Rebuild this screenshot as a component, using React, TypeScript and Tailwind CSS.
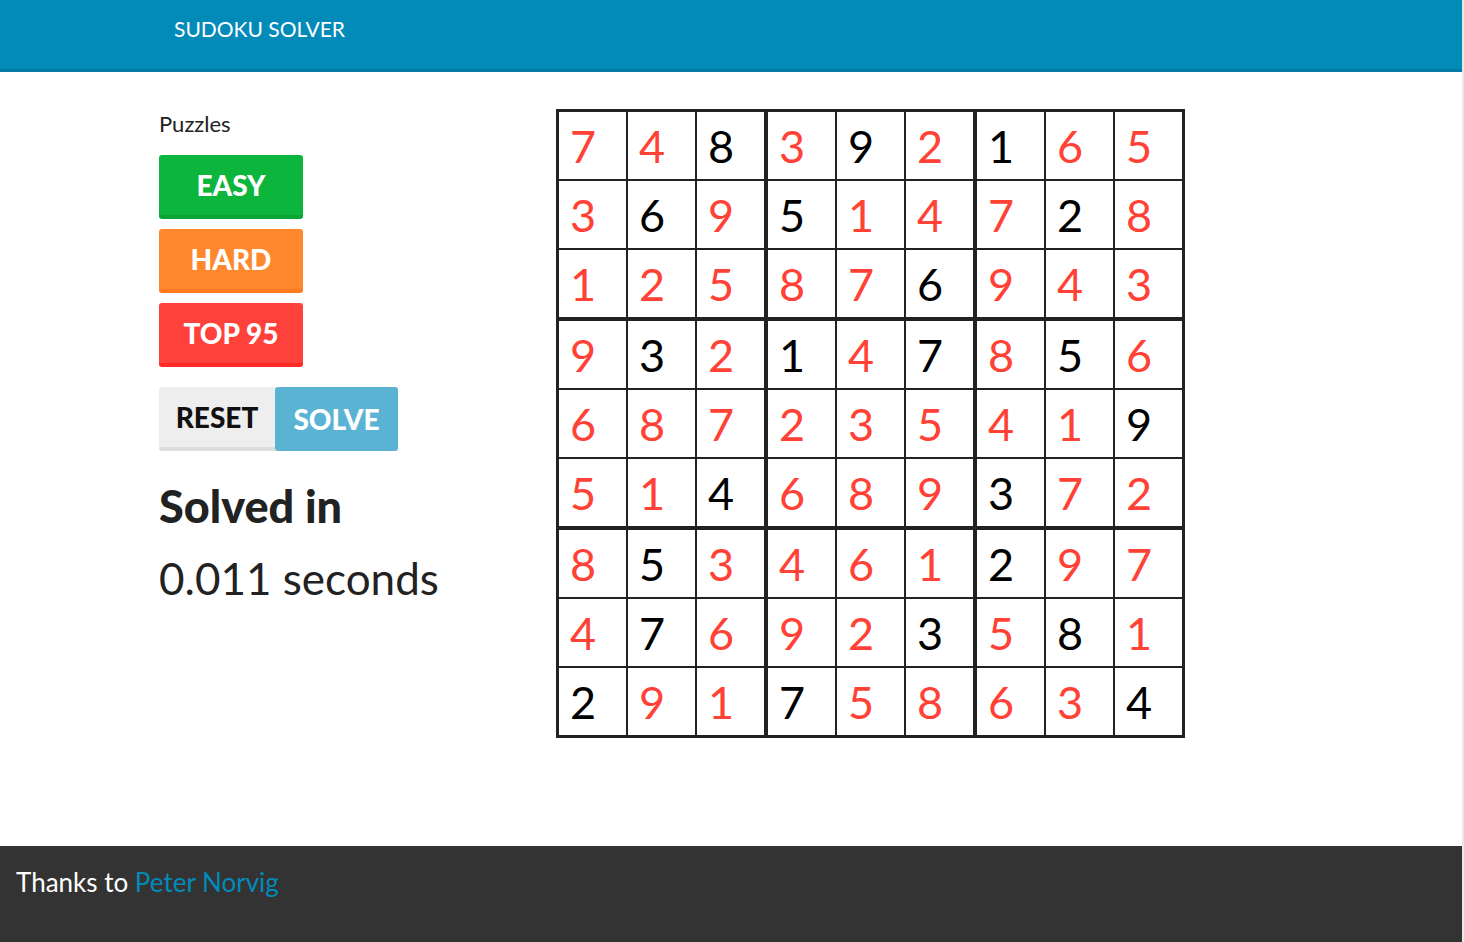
import React from "react";

const solution = [
  "748392165",
  "369514728",
  "125876943",
  "932147856",
  "687235419",
  "514689372",
  "853461297",
  "476923581",
  "291758634",
];

const givens = [
  "..8.9.1..",
  ".6.5...2.",
  ".....6...",
  ".3.1.7.5.",
  "........9",
  "..4...3..",
  ".5....2..",
  ".7...3.8.",
  "2..7....4",
];

const Cell = ({ value, given, row, col }: { value: string; given: boolean; row: number; col: number }) => {
  // thick lines between the 3x3 boxes, nothing on the outer edge
  const right = col === 8 ? "w-[67px]" : col === 2 || col === 5 ? "w-[71px] border-r-4" : "w-[69px] border-r-2";
  const bottom = row === 8 ? "h-[67px]" : row === 2 || row === 5 ? "h-[71px] border-b-4" : "h-[69px] border-b-2";
  return (
    <div
      className={`flex items-center pl-[11px] pt-[2px] border-[#222] ${right} ${bottom} ${
        given ? "text-black" : "text-[#ff4136]"
      }`}
    >
      <span className="text-[45px] leading-none">{value}</span>
    </div>
  );
};

const PuzzleButton = ({ label, color }: { label: string; color: string }) => (
  <button className={`w-[144px] h-[64px] rounded-[3px] border-b-4 text-white font-black text-[28px] ${color}`}>
    {label}
  </button>
);

export default function App() {
  return (
    <div className="flex w-[1464px] h-screen bg-[#e8e8e8]" style={{ fontFamily: "Lato, 'Noto Sans', sans-serif" }}>
      <div className="flex flex-col w-[1462px] h-full bg-white">
        {/* header */}
        <header className="h-[72px] bg-[#028ab9] border-b-[3px] border-[#0079a3] pl-[174px] pt-[13px]">
          <span className="text-white text-[21px]">SUDOKU SOLVER</span>
        </header>

        {/* main */}
        <main className="flex flex-1 pt-[37px]">
          <div className="w-[556px] pl-[159px] flex flex-col">
            <p className="text-[22px] text-[#222] leading-none mt-[4px]">Puzzles</p>
            <div className="flex flex-col gap-[10px] mt-[20px]">
              <PuzzleButton label="EASY" color="bg-[#0cb53c] border-[#0aa535]" />
              <PuzzleButton label="HARD" color="bg-[#ff882e] border-[#ff7a1c]" />
              <PuzzleButton label="TOP 95" color="bg-[#ff413b] border-[#ff2a26]" />
            </div>
            <div className="flex mt-[20px]">
              <button className="w-[116px] h-[64px] rounded-l-[3px] bg-[#eeeeee] border-b-4 border-[#dddddd] text-[#111] font-black text-[28px]">
                RESET
              </button>
              <button className="w-[123px] h-[64px] rounded-[3px] bg-[#5bb3d4] text-white font-black text-[28px]">
                SOLVE
              </button>
            </div>
            <h2 className="mt-[27px] text-[45px] font-black text-[#222] leading-tight">Solved in</h2>
            <p className="mt-[17px] text-[44px] text-[#222] leading-tight">0.011 seconds</p>
          </div>

          <div>
            <div className="grid grid-cols-[repeat(9,auto)] border-[3px] border-[#222] w-fit">
              {solution.map((r, ri) =>
                r
                  .split("")
                  .map((v, ci) => (
                    <Cell key={`${ri}-${ci}`} value={v} given={givens[ri][ci] !== "."} row={ri} col={ci} />
                  ))
              )}
            </div>
          </div>
        </main>

        {/* footer */}
        <footer className="h-[96px] bg-[#333333] pl-[16px] pt-[17px]">
          <span className="text-[26px] text-white">
            Thanks to <a className="text-[#028ab9]">Peter Norvig</a>
          </span>
        </footer>
      </div>
    </div>
  );
}
